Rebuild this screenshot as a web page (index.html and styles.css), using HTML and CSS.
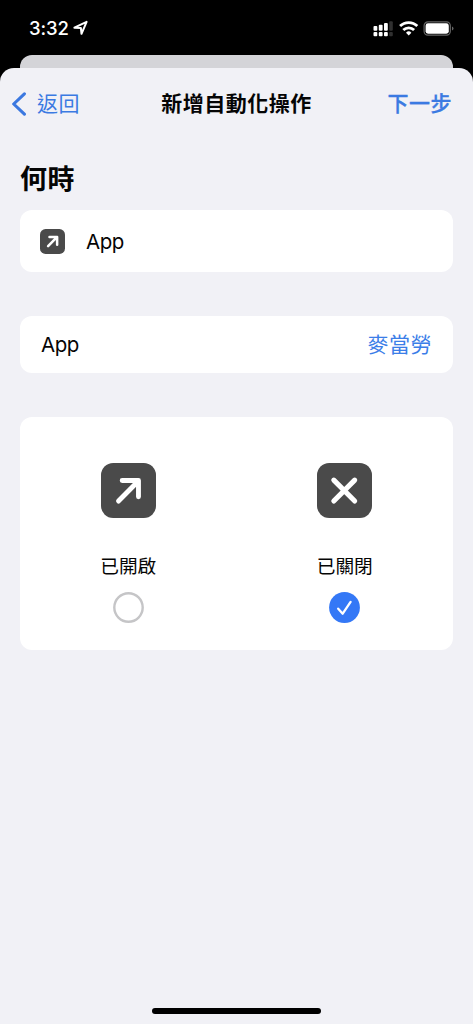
FILE: index.html
```html
<!DOCTYPE html>
<html lang="zh-Hant">
<head>
<meta charset="utf-8">
<meta name="viewport" content="width=device-width, initial-scale=1">
<title>新增自動化操作</title>
<link rel="stylesheet" href="styles.css">
</head>
<body>
<div class="phone">
  <header class="status">
    <div class="clock"><span class="time">3:32</span>
      <svg class="location" width="16" height="16" viewBox="0 0 16 16"><path d="M1.4 7.7 13.6 1.9 8.5 13.8 7.9 8.1Z" fill="none" stroke="#fff" stroke-width="2" stroke-linejoin="round"/></svg>
    </div>
    <svg class="indicators" width="82" height="18" viewBox="0 0 82 18">
      <g fill="#fff">
        <rect x=".5" y="6" width="3.8" height="4.8" rx="1"/><rect x="5.8" y="4.8" width="3.8" height="6" rx="1"/><rect x="11" y="3" width="3.8" height="7.8" rx="1"/>
        <rect x=".5" y="12" width="3.8" height="4.2" rx="1"/><rect x="5.8" y="12" width="3.8" height="4.2" rx="1"/><rect x="11" y="12" width="3.8" height="4.2" rx="1"/>
      </g>
      <g fill="#303030"><rect x="16.2" y="1.2" width="3.6" height="9.6" rx="1"/><rect x="16.2" y="12" width="3.6" height="4.2" rx="1"/></g>
      <g fill="none" stroke="#fff" stroke-width="2.8"><path d="M27.1 6.1a12.2 12.2 0 0 1 17.2 0"/><path d="M30.3 10a7.7 7.7 0 0 1 10.8 0"/></g>
      <path d="M33 12.7a3.8 3.8 0 0 1 5.4 0L35.7 15.5Z" fill="#fff"/>
      <rect x="51.1" y="1.9" width="26.2" height="13.2" rx="3.8" fill="none" stroke="#666" stroke-width="1.2"/>
      <rect x="52.6" y="3.3" width="23.2" height="10.4" rx="2.4" fill="#fff"/>
      <path d="M79 6.4v4q1.5-.5 1.5-2t-1.5-2" fill="#666"/>
    </svg>
  </header>
  <div class="back-sheet"></div>
  <main class="sheet">
    <nav class="nav">
      <a class="back"><svg width="15" height="24" viewBox="0 0 15 24"><path d="M12.4 1.8 1.7 12 12.4 22.2" fill="none" stroke="#3b78e0" stroke-width="3.1" stroke-linecap="round" stroke-linejoin="round"/></svg><span>返回</span></a>
      <h1 class="title">新增自動化操作</h1>
      <a class="next">下一步</a>
    </nav>
    <h2 class="heading">何時</h2>
    <section class="card trigger">
      <svg width="25" height="25" viewBox="0 0 54 54"><rect width="54" height="54" rx="12" fill="#4a4a4a"/><path d="M17.5 37 36 18M20.5 17.5H37V34" fill="none" stroke="#fff" stroke-width="5.4" stroke-linecap="round" stroke-linejoin="round"/></svg>
      <span>App</span>
    </section>
    <section class="card app-row"><span>App</span><a class="app-name">麥當勞</a></section>
    <section class="card options">
      <div class="option">
        <svg class="tile" viewBox="0 0 54 54"><rect width="54" height="54" rx="12" fill="#4a4a4a"/><path d="M17.2 37.4 36.2 18.2M20.8 17.2H36.8V33.2" fill="none" stroke="#fff" stroke-width="4.8" stroke-linecap="round" stroke-linejoin="round"/></svg>
        <span class="label">已開啟</span>
        <svg class="radio" viewBox="0 0 31 31"><circle cx="15.5" cy="15.5" r="14.2" fill="#fff" stroke="#c5c5c7" stroke-width="2.4"/></svg>
      </div>
      <div class="option">
        <svg class="tile" viewBox="0 0 54 54"><rect width="54" height="54" rx="12" fill="#4a4a4a"/><path d="M16.5 16.8 37 37.3M37 16.8 16.5 37.3" fill="none" stroke="#fff" stroke-width="5" stroke-linecap="round"/></svg>
        <span class="label">已關閉</span>
        <svg class="radio" viewBox="0 0 31 31"><circle cx="15.5" cy="15.5" r="15.4" fill="#3478f6"/><path d="M9.2 16.7 13.7 21.7 21.6 9.9" fill="none" stroke="#fff" stroke-width="2.3" stroke-linecap="round" stroke-linejoin="round"/></svg>
      </div>
    </section>
    <div class="home"></div>
  </main>
</div>
</body>
</html>
```
FILE: styles.css
```css
* { box-sizing: border-box; }
body { margin: 0; background: #000; font-family: Inter, "Noto Sans CJK TC", sans-serif; color: #050505; }
h1, h2 { margin: 0; }
svg { display: block; flex: none; }
.phone { height: 1024px; display: flex; flex-direction: column; overflow: hidden; }
.status { height: 55px; padding: 2px 18px 0 29px; display: flex; align-items: center; justify-content: space-between; flex: none; }
.clock { display: flex; align-items: center; gap: 4px; color: #fff; padding-bottom: 1px; }
.time { font-size: 18.5px; font-weight: 500; letter-spacing: -.1px; }
.back-sheet { height: 13px; margin: 0 20px; border-radius: 12px 12px 0 0; background: #d4d4d8; flex: none; }
.sheet { flex: 1; display: flex; flex-direction: column; padding: 0 20px; background: #f1f1f6; border-radius: 14px 14px 0 0; }
.nav { height: 70px; margin: 0 -8px; padding-top: 1px; display: grid; grid-template-columns: 1fr auto 1fr; align-items: center; color: #3b7ae2; font-size: 21px; letter-spacing: .5px; line-height: 30px; }
.back { display: flex; align-items: center; gap: 10px; }
.back span, .title, .next { padding-top: 1px; }
.title { font-size: 21px; line-height: 30px; font-weight: 600; letter-spacing: .5px; color: #050505; }
.next { justify-self: end; font-weight: 500; padding-right: 9px; -webkit-text-stroke: .3px currentColor; }
.heading { margin-top: 22px; height: 50px; line-height: 40px; font-size: 27px; font-weight: 700; letter-spacing: .4px; }
.card { background: #fff; border-radius: 12px; display: flex; align-items: center; font-size: 20.5px; letter-spacing: -.5px; flex: none; }
.trigger { height: 62px; padding: 0 20px; gap: 21px; }
.app-row { height: 57px; margin-top: 44px; padding: 0 21px; justify-content: space-between; }
.app-name { color: #3b7ee8; font-size: 21px; letter-spacing: .5px; padding-bottom: 3px; }
.options { height: 233px; margin-top: 44px; align-items: flex-start; padding-top: 46px; }
.option { flex: 1; display: flex; flex-direction: column; align-items: center; }
.tile { width: 55px; height: 55px; }
.label { margin-top: 35px; height: 28px; line-height: 28px; font-size: 18.7px; letter-spacing: 0; }
.radio { width: 31px; height: 31px; margin-top: 11px; }
.home { width: 169px; height: 6px; border-radius: 3px; background: #000; margin: auto auto 10px; }
```
